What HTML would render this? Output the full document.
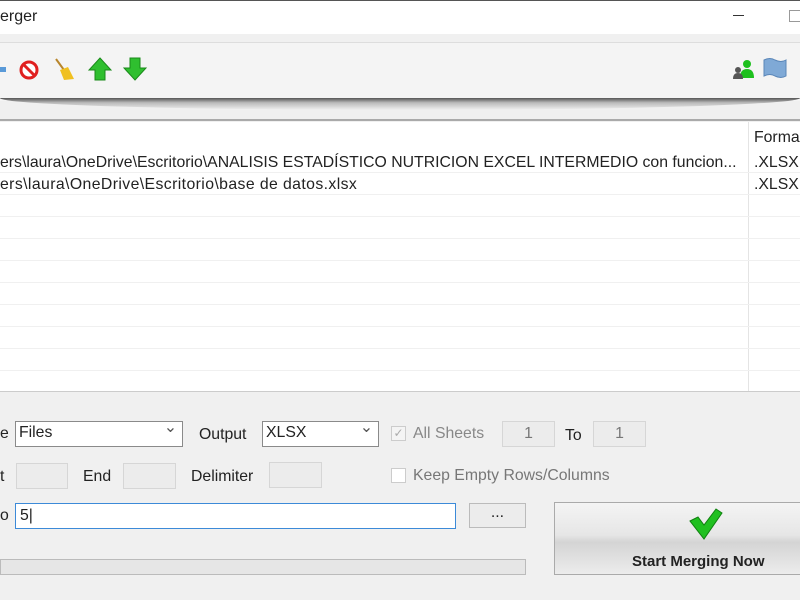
<!DOCTYPE html><html><head><style>
body{margin:0;width:800px;height:600px;overflow:hidden;background:#f0f0f0;font-family:"Liberation Sans",sans-serif;position:relative;font-size:15.8px;color:#222}
.a{position:absolute}
.box{position:absolute;background:#ececec;border:1px solid #d6d6d6;box-sizing:border-box;text-align:center;color:#777;line-height:24px}
.sel{position:absolute;background:#fff;border:1px solid #8a8a8a;box-sizing:border-box;padding-left:3px;line-height:22px}
.sel:after{content:"⌄";position:absolute;right:5px;top:-5px;color:#555}
.row{position:absolute;left:0;width:800px;height:21px;border-bottom:1px solid #f0f0f0}
</style></head><body>
<div class="a" style="left:0;top:0;width:800px;height:33px;background:#fff;border-top:1px solid #555"></div>
<div class="a" style="left:0;top:8px;font-size:16px">erger</div>
<div class="a" style="left:733px;top:15px;width:11px;height:1px;background:#333"></div>
<div class="a" style="left:789px;top:10px;width:10px;height:10px;border:1px solid #999"></div>
<div class="a" style="left:0;top:42px;width:800px;height:58px;background:#f4f4f4;border-top:1px solid #ddd"></div>
<div class="a" style="left:0;top:98px;width:800px;height:12px;background:linear-gradient(#555,#bbb 40%,#f0f0f0);border-radius:0 0 50% 50%/0 0 100% 100%"></div>
<div class="a" style="left:0;top:119px;width:800px;height:2px;background:#aaa"></div>
<div class="a" style="left:0;top:67px;width:6px;height:5px;background:#5a9ad8"></div>
<svg class="a" style="left:18px;top:59px" width="22" height="22"><circle cx="11" cy="11" r="8" fill="#fff" stroke="#e02020" stroke-width="3"/><line x1="6" y1="6" x2="16" y2="16" stroke="#e02020" stroke-width="3"/></svg>
<svg class="a" style="left:52px;top:57px" width="24" height="26"><line x1="4" y1="2" x2="12" y2="13" stroke="#b8862c" stroke-width="2"/><path d="M8 13 L16 10 L22 22 L12 23Z" fill="#f0c020"/></svg>
<svg class="a" style="left:88px;top:57px" width="24" height="24"><path d="M12 1 L23 13 H17 V23 H7 V13 H1Z" fill="#2fbf2f" stroke="#1a8a1a"/></svg>
<svg class="a" style="left:123px;top:57px" width="24" height="24"><path d="M12 23 L23 11 H17 V1 H7 V11 H1Z" fill="#2fbf2f" stroke="#1a8a1a"/></svg>
<svg class="a" style="left:730px;top:57px" width="26" height="26"><circle cx="17" cy="7" r="4" fill="#1ec01e"/><path d="M10 21 Q10 12 17 12 Q24 12 24 21Z" fill="#1ec01e"/><circle cx="8" cy="13" r="3" fill="#555"/><path d="M3 22 Q3 16 8 16 Q13 16 13 22Z" fill="#555"/></svg>
<svg class="a" style="left:762px;top:57px" width="26" height="24"><path d="M2 3 Q8 0 13 3 Q19 6 24 3 V19 Q19 22 13 19 Q8 16 2 19Z" fill="#7fa9d6" stroke="#5a86b8"/></svg>
<div class="a" style="left:0;top:122px;width:800px;height:270px;background:#fff"></div>
<div class="a" style="left:748px;top:122px;width:1px;height:270px;background:#e4e4e4"></div>
<div class="a" style="left:754px;top:129px">Forma</div>
<div class="row" style="top:151px"></div><div class="row" style="top:173px"></div><div class="row" style="top:195px"></div><div class="row" style="top:217px"></div><div class="row" style="top:239px"></div><div class="row" style="top:261px"></div><div class="row" style="top:283px"></div><div class="row" style="top:305px"></div><div class="row" style="top:327px"></div><div class="row" style="top:349px"></div><div class="row" style="top:371px"></div>
<div class="a" style="left:0;top:154px;white-space:nowrap">ers\laura\OneDrive\Escritorio\ANALISIS ESTADÍSTICO NUTRICION EXCEL INTERMEDIO con funcion...</div>
<div class="a" style="left:754px;top:154px">.XLSX</div>
<div class="a" style="left:0;top:176px;letter-spacing:0.4px">ers\laura\OneDrive\Escritorio\base de datos.xlsx</div>
<div class="a" style="left:754px;top:176px">.XLSX</div>
<div class="a" style="left:0;top:391px;width:800px;height:1px;background:#ccc"></div>
<div class="a" style="left:0;top:425px">e</div>
<div class="sel" style="left:15px;top:421px;width:168px;height:26px">Files</div>
<div class="a" style="left:199px;top:426px">Output</div>
<div class="sel" style="left:262px;top:421px;width:117px;height:26px">XLSX</div>
<div class="a" style="left:391px;top:426px;width:13px;height:13px;border:1px solid #ccc;background:#f4f4f4;color:#aaa;font-size:12px;line-height:13px;text-align:center">✓</div>
<div class="a" style="left:413px;top:425px;color:#888">All Sheets</div>
<div class="box" style="left:502px;top:421px;width:53px;height:26px">1</div>
<div class="a" style="left:565px;top:427px">To</div>
<div class="box" style="left:593px;top:421px;width:53px;height:26px">1</div>
<div class="a" style="left:0;top:468px">t</div>
<div class="box" style="left:16px;top:463px;width:52px;height:26px"></div>
<div class="a" style="left:83px;top:468px">End</div>
<div class="box" style="left:123px;top:463px;width:53px;height:26px"></div>
<div class="a" style="left:191px;top:468px">Delimiter</div>
<div class="box" style="left:269px;top:462px;width:53px;height:26px"></div>
<div class="a" style="left:391px;top:468px;width:13px;height:13px;border:1px solid #ccc;background:#fff"></div>
<div class="a" style="left:413px;top:467px;color:#777">Keep Empty Rows/Columns</div>
<div class="a" style="left:0;top:507px">o</div>
<div class="a" style="left:15px;top:503px;width:441px;height:26px;border:1px solid #3c8ad8;box-sizing:border-box;background:#fff;padding-left:4px;line-height:24px">5|</div>
<div class="a" style="left:469px;top:503px;width:57px;height:25px;border:1px solid #bbb;box-sizing:border-box;background:#ececec;text-align:center;line-height:18px">...</div>
<div class="a" style="left:0;top:559px;width:526px;height:16px;border:1px solid #bbb;box-sizing:border-box;background:#e6e6e6"></div>
<div class="a" style="left:554px;top:502px;width:250px;height:73px;border:1px solid #aaa;box-sizing:border-box;background:linear-gradient(#f4f4f4,#e6e6e6 45%,#d4d4d4 55%,#ececec)"></div>
<svg class="a" style="left:688px;top:507px" width="36" height="36"><path d="M2 14 L10 10 L16 18 L28 2 L34 6 L16 32Z" fill="#20c020" stroke="#108010"/></svg>
<div class="a" style="left:632px;top:553px;font-weight:bold;font-size:15px">Start Merging Now</div>
</body></html>
